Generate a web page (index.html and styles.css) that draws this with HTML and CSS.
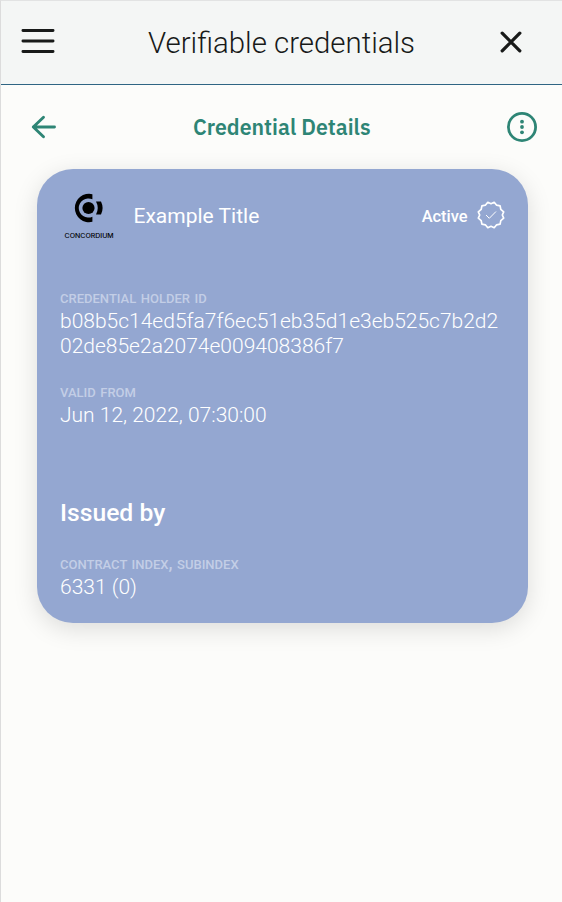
FILE: index.html
```html
<!DOCTYPE html>
<html lang="en">
<head>
<meta charset="utf-8">
<title>Verifiable credentials</title>
<link rel="stylesheet" href="styles.css">
</head>
<body>
<header class="topbar">
  <svg class="menu" width="34" height="26" viewBox="0 0 34 26"><path d="M1.900 2.5h30.200M1.900 13h30.200M1.900 23.5h30.200"/></svg>
  <h1>Verifiable credentials</h1>
  <svg class="close" width="22" height="22" viewBox="0 0 22 22"><path d="M2.200 2.200l17.600 17.600M19.800 2.200L2.200 19.800"/></svg>
</header>
<nav class="subbar">
  <svg class="back" width="26" height="26" viewBox="0 0 26 26"><path d="M23.500 13H2.3M12.500 3.200L2.3 13L12.500 22.800"/></svg>
  <h2>Credential Details</h2>
  <svg class="more" width="30" height="30" viewBox="0 0 30 30"><circle class="ring" cx="15" cy="15" r="13.6"/><circle cx="15" cy="9.700" r="1.9"/><circle cx="15" cy="15" r="1.9"/><circle cx="15" cy="20.300" r="1.9"/></svg>
</nav>
<main class="card">
  <div class="card-head">
    <div class="logo">
      <svg width="30" height="30" viewBox="0 0 30 30"><path d="M18.400 1.200A14.200 14.200 0 1 0 18.400 28.800V23.700A9.600 9.600 0 1 1 18.400 6.300Z"/><circle cx="14.5" cy="15" r="6.100"/><path d="M22 8.5H27Q30.200 15 27 21.500H22Q25.500 15 22 8.500Z"/></svg>
      <span>CONCORDIUM</span>
    </div>
    <div class="title">Example Title</div>
    <div class="status">Active</div>
    <svg class="badge" width="28" height="28" viewBox="0 0 28 28"><path class="seal" d="M14 2.700L17.200 1.300L19.650 4.200L23.100 4.900L23.800 8.350L26.700 10.800L25.300 14L26.700 17.200L23.800 19.650L23.100 23.100L19.650 23.800L17.200 26.700L14 25.300L10.800 26.700L8.350 23.800L4.900 23.100L4.200 19.650L1.300 17.200L2.700 14L1.300 10.800L4.200 8.350L4.900 4.900L8.350 4.200L10.800 1.300Z"/><path class="tick" d="M9.300 14.300L12.300 17.300L18.700 10.800"/></svg>
  </div>
  <section class="field holder"><h4>Credential holder ID</h4><p>b08b5c14ed5fa7f6ec51eb35d1e3eb525c7b2d202de85e2a2074e009408386f7</p></section>
  <section class="field valid"><h4>Valid from</h4><p>Jun 12, 2022, 07:30:00</p></section>
  <h3>Issued by</h3>
  <section class="field contract"><h4>Contract index<span class="comma">,</span> subindex</h4><p>6331 (0)</p></section>
</main>
</body>
</html>
```
FILE: styles.css
```css
* { box-sizing: border-box; }
body {
  margin: 0;
  height: 902px;
  overflow: hidden;
  border-left: 1px solid #dcdcdc;
  border-top: 1px solid #e2e3e3;
  background: #fcfcfa;
  font-family: Roboto, "Liberation Sans", sans-serif;
}
h1, h2, h3, h4, p { margin: 0; }
svg { display: block; flex: none; fill: none; stroke-linecap: round; stroke-linejoin: round; }
.topbar {
  display: flex;
  align-items: center;
  justify-content: space-between;
  height: 84px;
  padding: 0 40px 0 20.5px;
  background: #f4f6f5;
  border-bottom: 1px solid #2f6583;
}
.menu { stroke: #181a19; stroke-width: 2.8; margin: -3px 0 0 -.5px; }
.close { stroke: #181a19; stroke-width: 3.3; margin-top: -1px; }
h1 { font-size: 29.4px; line-height: 40px; font-weight: 300; color: #181a19; margin-left: 8px; white-space: nowrap; }
.subbar {
  display: flex;
  align-items: center;
  justify-content: space-between;
  height: 84px;
  padding: 0 25px 0 29.5px;
}
.back { stroke: #2e8575; stroke-width: 2.9; }
.more { fill: #2e8575; }
.ring { fill: none; stroke: #2e8575; stroke-width: 2.8; }
h2 { margin-top: -1px; font: 600 21.35px/30px "IBM Plex Sans", "Noto Sans", sans-serif; color: #2e8575; white-space: nowrap; }
.card {
  width: 491px;
  height: 454px;
  margin-left: 36px;
  padding: 24px 23px 0;
  border-radius: 36px;
  background: #94a7d1;
  color: #fff;
  box-shadow: 0 6px 24px rgba(0, 0, 0, .13);
}
.card-head { display: flex; height: 46px; align-items: center; }
.logo { width: 58px; display: flex; flex-direction: column; align-items: center; color: #000; }
.logo svg { fill: #000; }
.logo span { font: 500 6px/8px Inter, sans-serif; margin-top: 9px; transform: scaleX(1.16); }
.title { margin-left: 15.5px; font-size: 21px; line-height: 28px; }
.status { margin-left: auto; margin-right: 9px; font-size: 16.4px; font-weight: 500; }
.badge { stroke: #fff; stroke-width: 1.7; margin: -2px .5px 0 0; }
.badge .tick { stroke-width: 1; }
.field h4 {
  height: 20px;
  font-size: 13px;
  line-height: 20px;
  font-weight: 500;
  text-transform: uppercase;
  word-spacing: 1.3px;
  color: #c3cee6;
}
.comma { font-size: 18px; line-height: 0; }
.field p { font-size: 21px; line-height: 25px; font-weight: 300; overflow-wrap: anywhere; }
.holder { margin-top: 50px; }
.valid { margin-top: 24px; }
h3 { margin-top: 69.5px; font-size: 24.7px; line-height: 30px; font-weight: 550; }
.contract { margin-top: 27.5px; }
```
